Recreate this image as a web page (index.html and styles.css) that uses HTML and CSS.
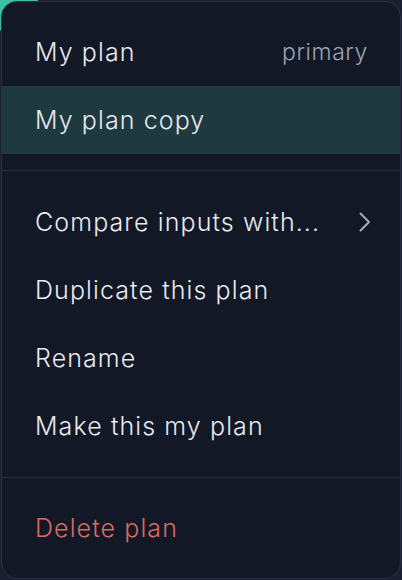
FILE: index.html
```html
<!DOCTYPE html>
<html lang="en">
<head>
<meta charset="utf-8">
<link rel="stylesheet" href="styles.css">
</head>
<body>
<div class="backdrop"></div>
<div class="menu">
  <div class="group">
    <div class="item"><span>My plan</span><span class="meta">primary</span></div>
    <div class="item active"><span>My plan copy</span></div>
  </div>
  <div class="sep"></div>
  <div class="group mid">
    <div class="item"><span>Compare inputs with...</span>
      <svg class="chev" width="12" height="20" viewBox="0 0 12 20"><path d="M1.5 1.5 L10 10 L1.5 18.5" fill="none" stroke="#a3abb8" stroke-width="2" stroke-linecap="round" stroke-linejoin="round"/></svg>
    </div>
    <div class="item"><span>Duplicate this plan</span></div>
    <div class="item"><span>Rename</span></div>
    <div class="item"><span>Make this my plan</span></div>
  </div>
  <div class="sep"></div>
  <div class="group">
    <div class="item danger"><span>Delete plan</span></div>
  </div>
</div>
</body>
</html>
```
FILE: styles.css
```css
html, body {
  margin: 0;
  padding: 0;
  background: #1b2030;
  width: 402px;
  height: 580px;
  overflow: hidden;
}
.backdrop {
  position: absolute;
  left: -20px;
  top: -26px;
  width: 58px;
  height: 58px;
  border-radius: 50%;
  background: #3fbfa4;
}
.menu {
  position: absolute;
  left: 1px;
  top: 1px;
  width: 398px;
  height: 576px;
  border: 1px solid #2a3141;
  border-radius: 16px;
  background: #121826;
  display: flex;
  flex-direction: column;
  font-family: Inter, "Noto Sans", sans-serif;
  font-size: 25px;
  letter-spacing: 1.1px;
  font-weight: 350;
  color: #e8eaee;
  overflow: hidden;
}
.group {
  display: flex;
  flex-direction: column;
  padding: 16px 0;
}
.group.mid { padding: 17px 0; }
.item {
  height: 68px;
  display: flex;
  align-items: center;
  justify-content: space-between;
  padding: 0 32px 0 33px;
}
.item.active { background: #1e3940; }
.meta {
  color: #9aa3b2;
  font-size: 23px;
  letter-spacing: 0.6px;
}
.chev { margin-right: -3px; }
.sep {
  height: 1px;
  background: #262d3b;
}
.danger { color: #d96a62; }
```
